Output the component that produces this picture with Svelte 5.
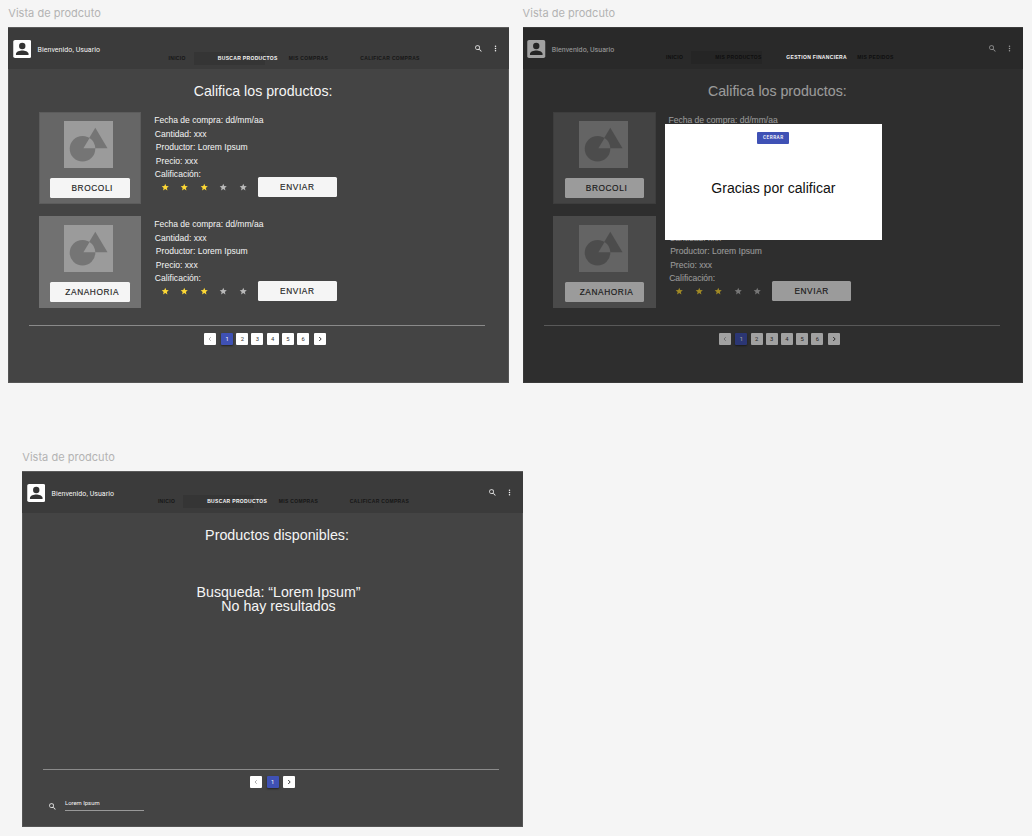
<script>
  const products = ['BROCOLI', 'ZANAHORIA'];
  const stars = [true, true, true, false, false];
  const buyerNav = ['INICIO', 'BUSCAR PRODUCTOS', 'MIS COMPRAS', 'CALIFICAR COMPRAS'];
  const sellerNav = ['INICIO', 'MIS PRODUCTOS', 'GESTION FINANCIERA', 'MIS PEDIDOS'];
</script>

{#snippet searchIcon()}
  <svg class="search" viewBox="0 0 24 24"><path fill="currentColor" d="M15.5 14h-.79l-.28-.27A6.47 6.47 0 0 0 16 9.5 6.5 6.5 0 1 0 9.5 16c1.61 0 3.09-.59 4.23-1.57l.27.28v.79l5 4.99L20.49 19l-4.99-5zm-6 0C7.01 14 5 11.99 5 9.5S7.01 5 9.5 5 14 7.01 14 9.5 11.99 14 9.5 14z"/></svg>
{/snippet}

{#snippet header(items, kind, active)}
  <header>
    <svg class="avatar" viewBox="0 0 18 18">
      <rect width="18" height="18" rx="1.8" fill="#fff" />
      <circle cx="9" cy="6" r="3.2" fill="#333" />
      <path d="M2.7 15v-1c0-2.3 4-3.4 6.3-3.4s6.3 1.1 6.3 3.4v1z" fill="#333" />
    </svg>
    <span class="welcome">Bienvenido, Usuario</span>
    <nav class={kind}>
      {#each items as item, i}
        <span class:tab={i === 1} class:active={i === active}>{item}</span>
      {/each}
    </nav>
    <div class="tools">
      {@render searchIcon()}
      <svg class="dots" viewBox="0 0 24 24"><path fill="currentColor" d="M12 8a2 2 0 1 0 0-4 2 2 0 0 0 0 4zm0 2a2 2 0 1 0 0 4 2 2 0 0 0 0-4zm0 6a2 2 0 1 0 0 4 2 2 0 0 0 0-4z"/></svg>
    </div>
  </header>
{/snippet}

{#snippet pager(count)}
  <div class="pager">
    <span class="page prev"><svg viewBox="0 0 6 6"><path d="M3.8 1.2 2 3l1.8 1.8" /></svg></span>
    <div class="numbers">
      {#each Array(count) as _, i}
        <span class="page" class:current={i === 0}>{i + 1}</span>
      {/each}
    </div>
    <span class="page next"><svg viewBox="0 0 6 6"><path d="M2.2 1 4.2 3l-2 2" /></svg></span>
  </div>
{/snippet}

{#snippet ratingView(items, kind, active)}
  {@render header(items, kind, active)}
  <h1>Califica los productos:</h1>
  <div class="list">
    {#each products as name}
      <article>
        <div class="card">
          <svg class="thumb" viewBox="0 0 49 47">
            <rect width="49" height="47" fill="#9b9b9b" />
            <circle cx="18.5" cy="27.8" r="12.8" fill="#757575" />
            <path d="M31.3 6.8 43.5 27.3H19z" fill="#757575" />
            <path d="M25.6 16.9 19.4 27.3H31.3A12.8 12.8 0 0 0 25.6 16.9z" fill="#9b9b9b" />
          </svg>
          <div class="button">{name}</div>
        </div>
        <div class="info">
          <p>Fecha de compra: dd/mm/aa</p>
          <p>Cantidad: xxx</p>
          <p>Productor: Lorem Ipsum</p>
          <p>Precio: xxx</p>
          <p>Calificación:</p>
          <div class="rate">
            {#each stars as on}
              <svg class="star" class:on viewBox="0 0 24 24"><path fill="currentColor" d="M12 17.27 18.18 21l-1.64-7.03L22 9.24l-7.19-.61L12 2 9.19 8.63 2 9.24l5.46 4.73L5.82 21z"/></svg>
            {/each}
            <div class="button send">ENVIAR</div>
          </div>
        </div>
      </article>
    {/each}
  </div>
  <hr />
  {@render pager(6)}
{/snippet}

<main>
  <section class="board first">
    <h2>Vista de prodcuto</h2>
    <div class="screen">{@render ratingView(buyerNav, 'buyer', 1)}</div>
  </section>

  <section class="board second">
    <h2>Vista de prodcuto</h2>
    <div class="screen">
      {@render ratingView(sellerNav, 'seller', 2)}
      <div class="shade"></div>
      <div class="modal">
        <span class="close">CERRAR</span>
        <p>Gracias por calificar</p>
      </div>
    </div>
  </section>

  <section class="board third">
    <h2>Vista de prodcuto</h2>
    <div class="screen">
      {@render header(buyerNav, 'lookup', 1)}
      <h1>Productos disponibles:</h1>
      <div class="empty">Busqueda: “Lorem Ipsum”<br />No hay resultados</div>
      <hr />
      {@render pager(1)}
      <div class="query">
        {@render searchIcon()}
        <span>Lorem Ipsum</span>
      </div>
    </div>
  </section>
</main>

<style>
  :global(body) { margin: 0; background: #f5f5f5; }
  main {
    position: relative;
    width: 1032px;
    height: 836px;
    overflow: hidden;
    background: #f5f5f5;
    font-family: "Liberation Sans", Arial, sans-serif;
  }
  .board { position: absolute; width: 500.5px; }
  .first { left: 8.3px; top: 6px; }
  .second { left: 522.6px; top: 6px; }
  .third { left: 22.3px; top: 450px; }
  h2 {
    margin: 0;
    height: 21px;
    font: 400 11px/15px Inter, sans-serif;
    letter-spacing: 0.02px;
    color: #b3b3b3;
    white-space: nowrap;
  }
  .screen {
    position: relative;
    box-sizing: border-box;
    height: 356px;
    background: #444;
    box-shadow: inset 0 0 0 1px #555;
    color: #f5f5f5;
  }
  header {
    display: flex;
    box-sizing: border-box;
    height: 42.4px;
    padding: 13px 9px 0 4.7px;
    background: #3b3b3b;
    box-shadow: inset 0 1px 0 #5a5a5a;
  }
  .avatar { width: 18.5px; height: 18px; flex: none; }
  .welcome {
    width: 122.7px;
    padding-left: 6px;
    box-sizing: border-box;
    font: 400 7px/20px Roboto, sans-serif;
    letter-spacing: 0.07px;
    white-space: nowrap;
  }
  nav {
    display: grid;
    margin-top: 12px;
    width: 290px;
    height: 13px;
    font-size: 5px;
    line-height: 13px;
    font-weight: 700;
    letter-spacing: 0.33px;
    color: #161616;
    white-space: nowrap;
  }
  .buyer { margin-left: 14.3px; grid-template-columns: 25.3px 95px 71.5px 60px; }
  .seller { margin-top: 11px; margin-left: -2.5px; grid-template-columns: 25.3px 95px 71px 60px; color: #101010; }
  .lookup { margin-top: 11px; margin-left: -10.3px; grid-template-columns: 25.3px 95.5px 71px 60px; }
  .tab { width: 47px; padding-left: 24px; background: #353535; }
  .active { color: #f5f5f5; }
  .seller .active { z-index: 2; }
  .tools { display: flex; gap: 8px; margin-left: auto; padding-top: 4.3px; }
  .tools svg { flex: none; }
  .search { width: 9px; height: 9px; }
  .dots { width: 9px; height: 9px; }
  h1 {
    margin: 12.6px 0 0;
    padding-left: 9px;
    font-size: 14.2px;
    line-height: 18px;
    font-weight: 400;
    text-align: center;
  }
  .list { display: grid; gap: 12px; padding: 12.3px 0 0 30.7px; }
  article { display: flex; height: 92px; }
  .card {
    display: flex;
    flex-direction: column;
    align-items: center;
    box-sizing: border-box;
    width: 102.5px;
    height: 92px;
    padding-top: 8.5px;
    background: #666;
    box-shadow: inset 0 0 0 1px #5c5c5c;
  }
  article:nth-child(2) .card { background: #717171; box-shadow: none; }
  .thumb { display: block; flex: none; width: 49px; height: 47px; margin-right: 3px; }
  .button {
    box-sizing: border-box;
    width: 79.5px;
    height: 20.5px;
    margin-top: 9.8px;
    padding-left: 4px;
    border-radius: 1.5px;
    background: #f5f5f5;
    color: #1f1f1f;
    font-size: 8.3px;
    line-height: 21px;
    letter-spacing: 0.6px;
    text-align: center;
    -webkit-text-stroke: 0.15px #1f1f1f;
  }
  .info { padding: 1.9px 0 0 12.7px; }
  p { margin: 0; font-size: 8.55px; line-height: 13.5px; white-space: nowrap; }
  .info p:nth-child(2) { padding-left: 0.7px; }
  .info p:nth-child(3), .info p:nth-child(4) { padding-left: 1.7px; }
  .info p:nth-child(5) { padding-left: 0.7px; line-height: 12px; }
  .rate { display: flex; align-items: center; height: 20.5px; margin-top: -3.6px; padding-left: 6.8px; }
  .star { width: 8.5px; height: 8.5px; margin-right: 11px; color: #b9b9b9; }
  .on { color: #fdd835; }
  .send { margin: 0 0 0 -0.9px; padding-left: 0; }
  .second article:first-child .info p:nth-child(n + 2),
  .second article:first-child .rate { visibility: hidden; }
  hr {
    width: 456px;
    height: 1px;
    margin: 16.6px 0 0 21.2px;
    border: 0;
    background: #8a8a8a;
  }
  .pager { display: flex; justify-content: center; gap: 4.7px; margin-top: 7.2px; padding-left: 13px; }
  .numbers { display: flex; gap: 3.2px; }
  .page {
    display: block;
    width: 12px;
    height: 12px;
    border-radius: 1px;
    background: #fff;
    color: #333;
    font: 400 5.8px/12px Roboto, sans-serif;
    text-align: center;
  }
  .page svg { display: block; width: 6px; height: 6px; margin: 3px; fill: none; stroke: #222; stroke-width: 0.9; }
  .prev svg { stroke: #888; stroke-width: 0.7; }
  .current { background: #3f51b5; color: #fff; box-shadow: 0 1px 2px rgb(0 0 0 / 0.5); }
  .shade { position: absolute; inset: 0; z-index: 1; background: rgb(14 14 14 / 0.39); }
  .modal {
    position: absolute;
    z-index: 3;
    left: 142px;
    top: 96.5px;
    box-sizing: border-box;
    width: 217.5px;
    height: 116.5px;
    padding-top: 8.5px;
    background: #fff;
    color: #111;
    text-align: center;
  }
  .close {
    display: block;
    width: 32px;
    height: 12px;
    margin: 0 auto;
    border-radius: 1px;
    background: #3f51b5;
    color: #fff;
    font: 500 4.7px/12px Roboto, sans-serif;
    letter-spacing: 0.5px;
  }
  .modal p { margin-top: 35px; font-size: 14.05px; line-height: 18px; }
  .third h1 { padding-left: 9px; font-size: 14.3px; }
  .third .pager { margin-top: 6.2px; padding-left: 0; }
  .empty { height: 28px; margin-top: 40.6px; padding-left: 12px; font-size: 14.2px; line-height: 14px; text-align: center; }
  .third hr { margin-top: 156.5px; }
  .query { display: flex; padding: 10.2px 0 0 26px; }
  .query .search { margin-top: 4px; }
  .query span {
    width: 79px;
    height: 12px;
    margin-left: 7.7px;
    border-bottom: 1px solid #999;
    font: 400 5.9px/10px Roboto, sans-serif;
  }
</style>
